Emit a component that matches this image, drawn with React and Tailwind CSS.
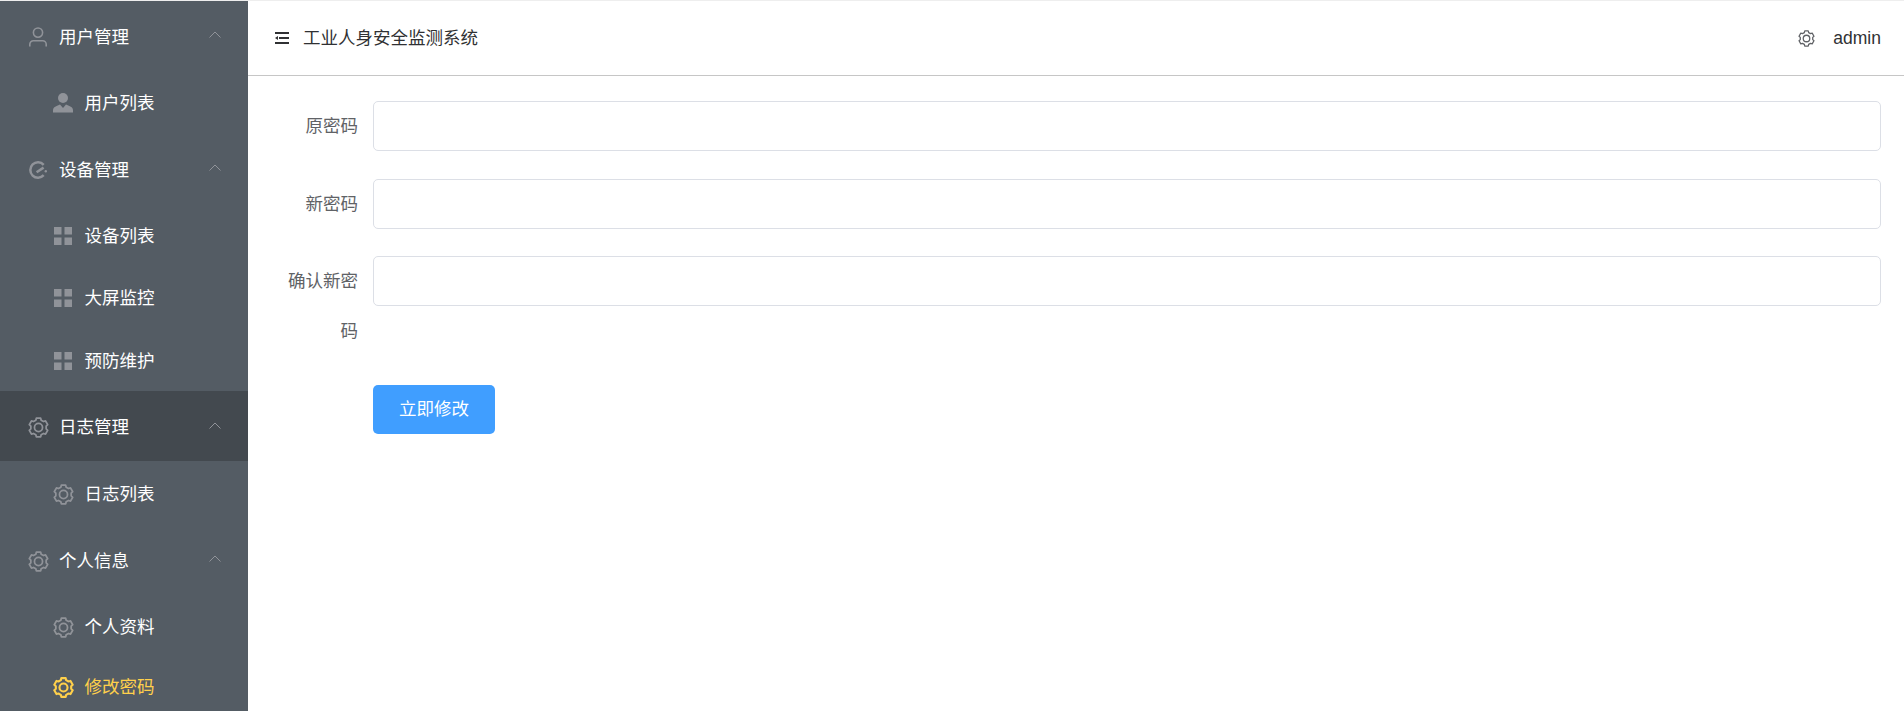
const gearPath = (() => {
  const pts = [];
  const R = 11;
  const r = 8.9;
  for (let k = 0; k < 6; k++) {
    const a = 90 + k * 60;
    [[r, a - 20], [R, a - 13], [R, a + 13], [r, a + 20]].forEach(([rad, deg]) => {
      const t = (deg * Math.PI) / 180;
      pts.push(`${(12 + rad * Math.cos(t)).toFixed(2)} ${(12 - rad * Math.sin(t)).toFixed(2)}`);
    });
  }
  return `M${pts.join("L")}Z`;
})();

function Gear({ className, sw = 2 }) {
  return (
    <svg viewBox="0 0 24 24" fill="none" stroke="currentColor" strokeWidth={sw} strokeLinejoin="round" className={className}>
      <path d={gearPath} />
      <circle cx="12" cy="12" r="4.6" />
    </svg>
  );
}

function UserIcon({ className }) {
  return (
    <svg viewBox="0 0 18 20" fill="none" stroke="currentColor" strokeWidth="1.6" className={className}>
      <circle cx="9" cy="5.6" r="4.6" />
      <path d="M.8 19.5v-2.2a3.6 3.6 0 0 1 3.6-3.6h9.2a3.6 3.6 0 0 1 3.6 3.6v2.2" />
    </svg>
  );
}

function CustomIcon({ className }) {
  return (
    <svg viewBox="0 0 20 20" fill="currentColor" className={className}>
      <circle cx="10" cy="5" r="5" />
      <path d="M0 19.500v-2.200c0-2.200 1.600-3.600 3.600-4.300L7 11.500l3 3.400 3-3.400 3.400 1.500c2 .7 3.600 2.100 3.600 4.300v2.200z" />
    </svg>
  );
}

function Odometer({ className }) {
  return (
    <svg viewBox="0 0 18 18" fill="none" stroke="currentColor" strokeWidth="2.5" className={className}>
      <path d="M14.700 14.200A7.700 7.700 0 1 1 14.700 3.800" />
      <path d="M7.600 11.200l7-4.600" />
      <circle cx="16.800" cy="10.200" r="1.200" fill="currentColor" stroke="none" />
    </svg>
  );
}

function GridIcon({ className }) {
  return (
    <svg viewBox="0 0 18 18" fill="currentColor" className={className}>
      <rect x="0" y="0" width="7.500" height="7.500" />
      <rect x="10.500" y="0" width="7.500" height="7.500" />
      <rect x="0" y="10.500" width="7.500" height="7.500" />
      <rect x="10.500" y="10.500" width="7.500" height="7.500" />
    </svg>
  );
}

function ArrowUp() {
  return (
    <svg viewBox="0 0 12 7" fill="none" stroke="currentColor" strokeWidth="1" className="w-[12px] h-[7px] mb-[5px] text-[#909399]">
      <path d="M.5 6.500 6 1l5.500 5.500" />
    </svg>
  );
}

function FoldIcon({ className }) {
  return (
    <svg viewBox="0 0 14 12" className={className} fill="currentColor">
      <rect x="0" y="0" width="14" height="2" />
      <rect x="4" y="5" width="10" height="2" />
      <path d="M0 6l3-2v4z" />
      <rect x="0" y="10" width="14" height="2" />
    </svg>
  );
}

function GroupRow({ icon, label, h, active }) {
  return (
    <div className={`flex items-center pl-[26px] pr-[27px] ${h} ${active ? "bg-[#43494f] pt-[3px]" : ""}`}>
      <span className="w-[24px] flex justify-center">{icon}</span>
      <span className="ml-[9px] flex-1 text-white">{label}</span>
      <ArrowUp />
    </div>
  );
}

function SubRow({ icon, label, h, gold }) {
  return (
    <div className={`flex items-center pl-[51px] ${h}`}>
      <span className="w-[24px] flex justify-center">{icon}</span>
      <span className={`ml-[10px] -translate-x-[0.5px] ${gold ? "text-[#ffd04b]" : "text-white"}`}>{label}</span>
    </div>
  );
}

function Field({ label, mb }) {
  return (
    <div className={`flex items-start ${mb}`}>
      <label className="w-[100px] pr-[15px] text-right text-[#606266] leading-[50px] shrink-0">{label}</label>
      <input className="flex-1 min-w-0 h-[50px] rounded-[5px] border border-[#dcdfe6] bg-white outline-none" />
    </div>
  );
}

export default function App() {
  const g = "w-[21px] h-[21px] text-[#909399]";
  return (
    <div className="flex h-[711px] overflow-hidden bg-[#eeeeee] pt-px text-[17.5px] font-['Liberation_Sans','Noto_Sans_CJK_SC',sans-serif]">
      <aside className="w-[248px] shrink-0 bg-[#545c64] overflow-hidden pt-px">
        <GroupRow h="h-[70px]" label="用户管理" icon={<UserIcon className="w-[18px] h-[20px] text-[#909399]" />} />
        <SubRow h="h-[62px]" label="用户列表" icon={<CustomIcon className="w-[20px] h-[20px] text-[#909399]" />} />
        <GroupRow h="h-[72px]" label="设备管理" icon={<Odometer className="w-[18px] h-[18px] text-[#909399]" />} />
        <SubRow h="h-[60px]" label="设备列表" icon={<GridIcon className="w-[18px] h-[18px] text-[#909399]" />} />
        <SubRow h="h-[64px]" label="大屏监控" icon={<GridIcon className="w-[18px] h-[18px] text-[#909399]" />} />
        <SubRow h="h-[61px] pt-px" label="预防维护" icon={<GridIcon className="w-[18px] h-[18px] text-[#909399]" />} />
        <GroupRow h="h-[70px]" active label="日志管理" icon={<Gear className={g} />} />
        <SubRow h="h-[66px]" label="日志列表" icon={<Gear className={g} />} />
        <GroupRow h="h-[68px]" label="个人信息" icon={<Gear className={g} />} />
        <SubRow h="h-[64px]" label="个人资料" icon={<Gear className={g} />} />
        <SubRow h="h-[57px]" gold label="修改密码" icon={<Gear sw={2.4} className="w-[21px] h-[21px] text-[#ffd04b]" />} />
      </aside>
      <main className="flex-1 min-w-0 bg-white">
        <header className="h-[74px] border-b border-[#c6c6c6] flex items-center pl-[27px] pr-[23px] text-[#303133] box-content">
          <FoldIcon className="w-[14px] h-[12px]" />
          <span className="ml-[14px] flex-1">工业人身安全监测系统</span>
          <Gear sw={1.8} className="w-[17px] h-[17px] text-[#606266]" />
          <span className="ml-[18px]">admin</span>
        </header>
        <form className="pl-[25px] pr-[23px] pt-[25px]">
          <Field label="原密码" mb="mb-[28px]" />
          <Field label="新密码" mb="mb-[27px]" />
          <Field label="确认新密码" mb="mb-[29px]" />
          <div className="pl-[100px]">
            <button type="button" className="w-[122px] h-[49px] rounded-[5px] bg-[#409eff] text-white">立即修改</button>
          </div>
        </form>
      </main>
    </div>
  );
}
